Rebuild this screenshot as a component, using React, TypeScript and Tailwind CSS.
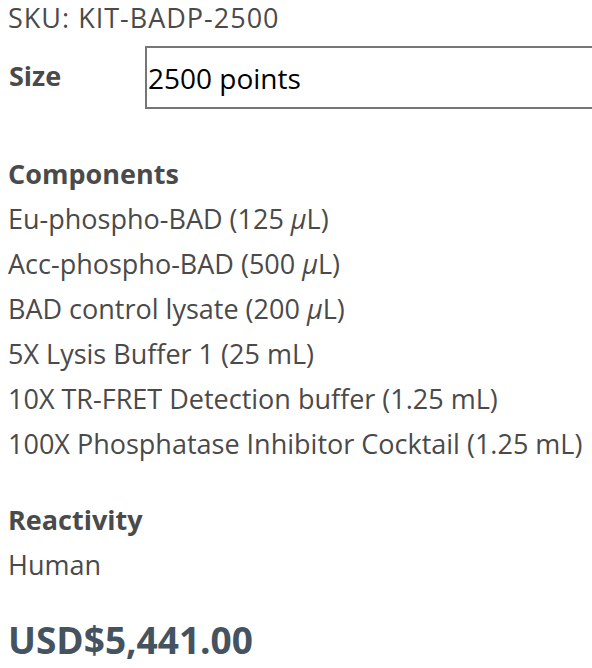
const components = [
  "Eu-phospho-BAD (125 μL)",
  "Acc-phospho-BAD (500 μL)",
  "BAD control lysate (200 μL)",
  "5X Lysis Buffer 1 (25 mL)",
  "10X TR-FRET Detection buffer (1.25 mL)",
  "100X Phosphatase Inhibitor Cocktail (1.25 mL)",
];

function withMicro(text: string) {
  const parts = text.split("μ");
  if (parts.length === 1) return text;
  return (
    <>
      {parts[0]}
      <span className="italic">μ</span>
      {parts[1]}
    </>
  );
}

export default function App() {
  return (
    <div
      className="h-[668px] w-[592px] overflow-hidden bg-white pl-2 text-[27px] text-[#4a4a4a]"
      style={{ fontFamily: '"Open Sans", sans-serif' }}
    >
      <p className="leading-[36px] tracking-[1px]">SKU: KIT-BADP-2500</p>

      <div className="mt-[10px] flex items-center">
        <span className="w-[137px] shrink-0 pl-[1px] font-bold leading-[36px] mb-[4px]">Size</span>
        <div className="flex h-[63px] w-[470px] shrink-0 items-center border-2 border-[#767676] pl-[1px] text-[28px] text-black">
          2500 points
        </div>
      </div>

      <h3 className="mt-[42px] font-bold leading-[45px]">Components</h3>
      <ul className="leading-[45px]">
        {components.map((c) => (
          <li key={c}>{withMicro(c)}</li>
        ))}
      </ul>

      <h3 className="mt-[31px] font-bold leading-[45px]">Reactivity</h3>
      <p className="leading-[45px]">Human</p>

      <p className="mt-[31px] text-[37px] font-bold leading-[44px] text-[#44535f]">USD$5,441.00</p>
    </div>
  );
}
